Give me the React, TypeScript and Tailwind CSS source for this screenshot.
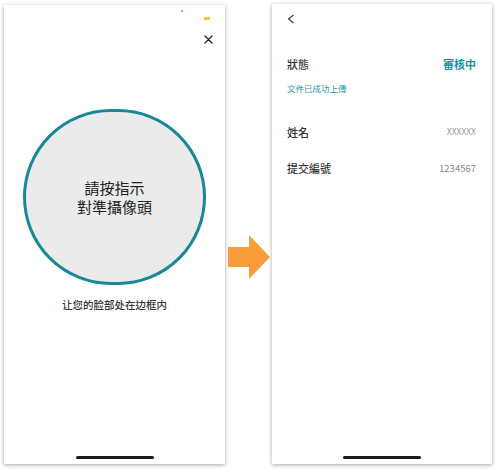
import React from "react";

const font = { fontFamily: '"Noto Sans CJK TC", "Noto Sans CJK SC", "Liberation Sans", sans-serif' };

const HomeBar: React.FC = () => (
    <div className="mt-auto mb-[5px] flex justify-center">
        <div className="w-[78px] h-[3px] rounded-full bg-[#1a1a1a]" />
    </div>
);

const FaceScreen: React.FC = () => (
    <div className="ml-[4px] mt-[5px] w-[221px] h-[459px] bg-white shadow-[0_1px_4px_rgba(0,0,0,0.35)] flex flex-col">
        {/* status bar */}
        <div className="relative h-[20px]">
            <div className="absolute left-[177px] top-[5px] w-[2px] h-[2px] rounded-full bg-[#3cc45a]" />
            <div className="absolute left-[200px] top-[12px] w-[6px] h-[3px] rounded-[1px] bg-[#f5c518]" />
        </div>
        <div className="flex justify-end pr-[12px] h-[28px] items-center">
            <svg width="9" height="9" viewBox="0 0 9 9">
                <path d="M1 1L8 8M8 1L1 8" stroke="#222" strokeWidth="1.3" strokeLinecap="round" />
            </svg>
        </div>
        <div className="mt-[56px] flex justify-center">
            <div className="w-[183px] h-[176px] rounded-full border-[3px] border-[#188796] bg-[#ebebeb] flex flex-col items-center justify-center text-[15px] leading-[19px] text-[#222]">
                <span className="block h-[19px]">請按指示</span>
                <span className="block h-[19px]">對準攝像頭</span>
            </div>
        </div>
        <div className="mt-[12px] text-center text-[10.5px] font-medium text-[#333]">让您的脸部处在边框内</div>
        <HomeBar />
    </div>
);

const Row: React.FC<{ label: string; value: string; valueClass: string; className?: string }> = ({ label, value, valueClass, className }) => (
    <div className={"flex items-center justify-between " + (className ?? "")}>
        <span className="text-[11px] font-medium text-[#333]">{label}</span>
        <span className={valueClass}>{value}</span>
    </div>
);

const StatusScreen: React.FC = () => (
    <div className="mt-[4px] w-[220px] h-[460px] bg-white shadow-[0_1px_4px_rgba(0,0,0,0.35)] flex flex-col px-[15px]">
        <div className="mt-[6px] h-[18px] flex items-center">
            <svg width="8" height="10" viewBox="0 0 8 10">
                <path d="M6.5 1L1.5 5L6.5 9" stroke="#333" strokeWidth="1.1" fill="none" />
            </svg>
        </div>
        <Row
            className="mt-[28px] h-[16px] pr-[1px]"
            label="狀態"
            value="審核中"
            valueClass="text-[11px] font-bold text-[#1e8ea0]"
        />
        <div className="mt-[10px] text-[8.5px] text-[#2a97a8]">文件已成功上傳</div>
        <Row
            className="mt-[29px] h-[16px] pr-[1px]"
            label="姓名"
            value="XXXXXX"
            valueClass="text-[8.5px] text-[#999]"
        />
        <Row
            className="mt-[20px] h-[16px] pr-[1px]"
            label="提交編號"
            value="1234567"
            valueClass="text-[9.5px] text-[#888]"
        />
        <HomeBar />
    </div>
);

const Arrow: React.FC = () => (
    <div className="w-[47px] h-[474px] flex items-start justify-center">
        <svg className="mt-[235px] ml-[2px]" width="43" height="44" viewBox="0 0 43 44">
            <path d="M0 12H21V0L42 22L21 44V32H0Z" fill="#f79d3a" />
        </svg>
    </div>
);

export default function App() {
    return (
        <div className="w-[500px] h-[474px] bg-white flex items-start overflow-hidden" style={font}>
            <FaceScreen />
            <Arrow />
            <StatusScreen />
        </div>
    );
}
